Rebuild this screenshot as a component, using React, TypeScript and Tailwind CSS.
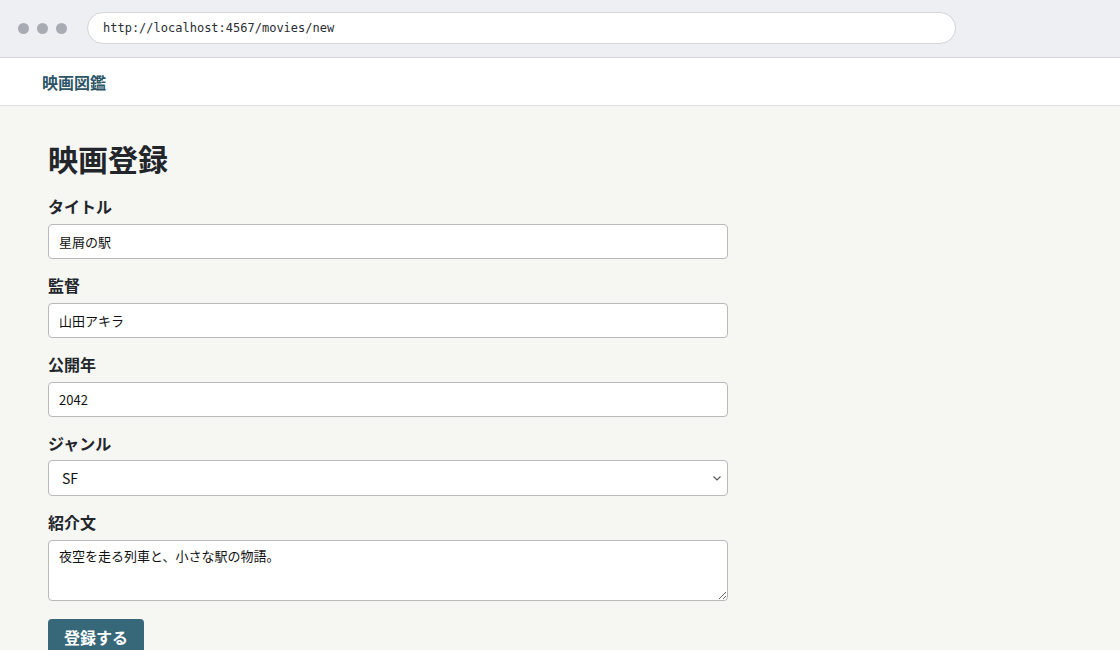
const fields = [
  { label: 'タイトル', value: '星屑の駅' },
  { label: '監督', value: '山田アキラ' },
  { label: '公開年', value: '2042' },
]

export default function App() {
  return (
    <div
      className="flex h-[650px] w-[1120px] flex-col overflow-hidden bg-[#f6f6f3] text-[#22262b]"
      style={{ fontFamily: '"Noto Sans CJK JP", "Noto Sans", sans-serif' }}
    >
      {/* browser chrome */}
      <div className="flex h-[58px] shrink-0 items-center gap-[20px] border-b border-[#d6d6da] bg-[#eeeff3] pb-[1px] pl-[18px]">
        <div className="flex gap-[8px]">
          <span className="h-[11px] w-[11px] rounded-full bg-[#a9abb3]" />
          <span className="h-[11px] w-[11px] rounded-full bg-[#a9abb3]" />
          <span className="h-[11px] w-[11px] rounded-full bg-[#a9abb3]" />
        </div>
        <div className="flex h-[32px] w-[869px] items-center rounded-full border border-[#d3d4d9] bg-white pl-[15px] text-[12px] text-[#2a2d33]" style={{ fontFamily: '"DejaVu Sans Mono", monospace' }}>
          http://localhost:4567/movies/new
        </div>
      </div>

      {/* site header */}
      <header className="flex h-[48px] shrink-0 items-center border-b border-[#dedfdc] bg-white pl-[42px]">
        <span className="text-[16px] font-bold text-[#2d5566]">映画図鑑</span>
      </header>

      <main className="w-[728px] pl-[48px] pt-[34px]">
        <h1 className="text-[30px] font-bold leading-[36px]">映画登録</h1>
        <form className="mt-[18px] flex flex-col">
          {fields.map((f) => (
            <div key={f.label} className="mb-[14px]">
              <label className="mb-[6px] block text-[16px] font-bold leading-[24px]">{f.label}</label>
              <input
                readOnly
                value={f.value}
                className="block h-[35px] w-[680px] rounded-[4px] border border-[#b9b9b9] bg-white px-[10px] text-[13px] text-[#111]"
              />
            </div>
          ))}
          <div className="mb-[14px]">
            <label className="mb-[5px] block text-[16px] font-bold leading-[24px]">ジャンル</label>
            <div className="flex h-[36px] w-[680px] items-center justify-between rounded-[4px] border border-[#b9b9b9] bg-white pl-[13px] pr-[5px] text-[14px] text-[#111]">
              <span>SF</span>
              <svg width="10" height="10" viewBox="0 0 10 10" fill="none" stroke="#555" strokeWidth="1.1">
                <path d="M1.5 3.5 L5 7 L8.5 3.5" />
              </svg>
            </div>
          </div>
          <div className="mb-[18px]">
            <label className="mb-[6px] block text-[16px] font-bold leading-[24px]">紹介文</label>
            <textarea
              readOnly
              value="夜空を走る列車と、小さな駅の物語。"
              className="block h-[61px] w-[680px] rounded-[4px] border border-[#b9b9b9] bg-white px-[10px] py-[5px] text-[13px] text-[#111]"
            />
          </div>
          <button
            type="button"
            className="h-[40px] w-[96px] rounded-[4px] bg-[#36687a] pb-[4px] text-[16px] font-bold text-white"
          >
            登録する
          </button>
        </form>
      </main>
    </div>
  )
}
